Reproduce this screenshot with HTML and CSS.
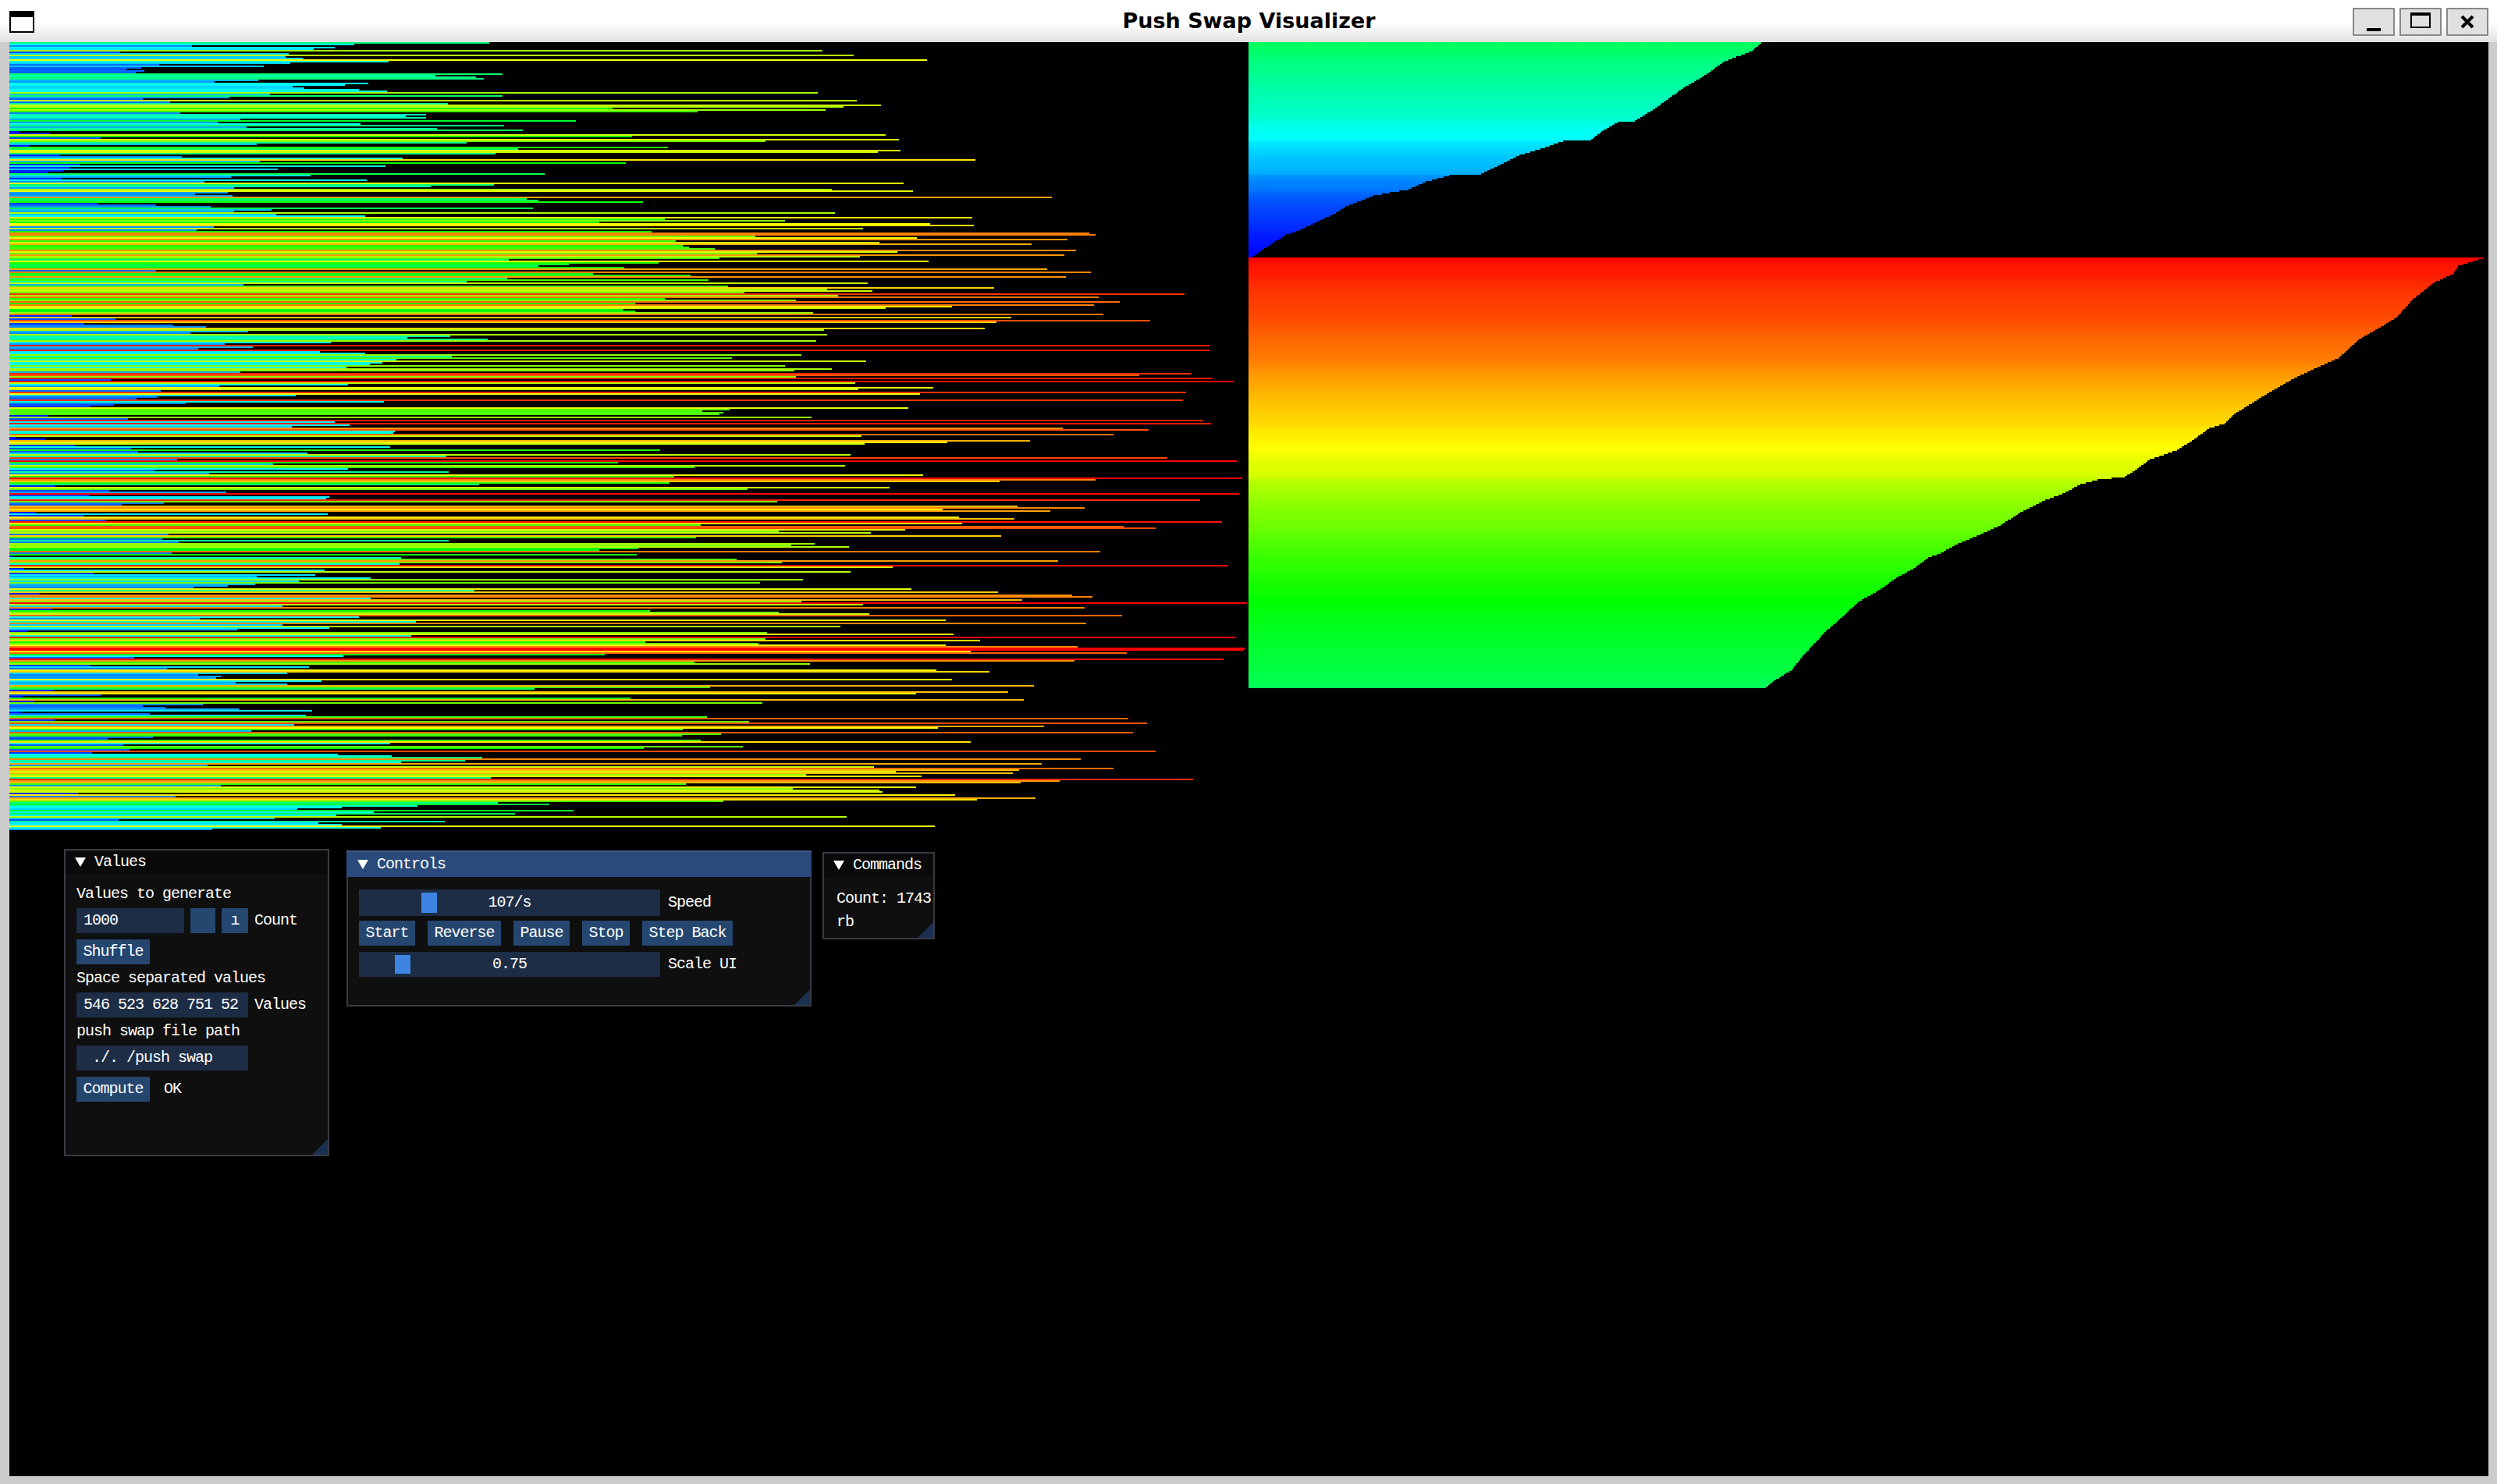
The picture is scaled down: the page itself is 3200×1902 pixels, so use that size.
FILE: index.html
```html
<!DOCTYPE html>
<html lang="en">
<head>
    <meta charset="UTF-8">
    <title>Push Swap Visualizer</title>
    <link rel="stylesheet" href="styles.css">
</head>
<body>
    <div class="app">
        <header class="titlebar">
            <div class="titlebar-left"><span class="app-icon"></span></div>
            <div class="titlebar-title">Push Swap Visualizer</div>
            <div class="titlebar-buttons">
                <button class="wm-btn"><svg width="18" height="4" viewBox="0 0 18 4" class="wm-min"><rect width="18" height="4"/></svg></button>
                <button class="wm-btn"><span class="wm-max"></span></button>
                <button class="wm-btn"><svg width="18" height="18" viewBox="0 0 18 18"><path d="M2 2 L16 16 M16 2 L2 16" stroke="#000" stroke-width="4" fill="none"/></svg></button>
            </div>
        </header>

        <main class="canvas">
            <div class="stack-left" id="bars"></div>
            <div class="stack-right">
                <div id="stack-b"></div>
                <div id="stack-a"></div>
            </div>

            <!-- Values window -->
            <section class="win win-values">
                <div class="win-title"><svg class="arrow" viewBox="0 0 14 12"><path d="M0 0 H14 L7 12 Z"/></svg><span>Values</span></div>
                <div class="win-body">
                    <div class="line">Values to generate</div>
                    <div class="row">
                        <div class="input input-count">1000</div>
                        <div class="btn btn-step"></div>
                        <div class="btn btn-plus">ı</div>
                        <div class="label">Count</div>
                    </div>
                    <div class="row"><div class="btn">Shuffle</div></div>
                    <div class="line">Space separated values</div>
                    <div class="row">
                        <div class="input input-wide">546 523 628 751 52</div>
                        <div class="label">Values</div>
                    </div>
                    <div class="line">push swap file path</div>
                    <div class="row"><div class="input input-wide"> ./. /push swap</div></div>
                    <div class="row">
                        <div class="btn">Compute</div>
                        <div class="label label-ok">OK</div>
                    </div>
                </div>
                <div class="grip"></div>
            </section>

            <!-- Controls window -->
            <section class="win win-controls">
                <div class="win-title"><svg class="arrow" viewBox="0 0 14 12"><path d="M0 0 H14 L7 12 Z"/></svg><span>Controls</span></div>
                <div class="win-body">
                    <div class="row">
                        <div class="slider slider-speed"><span class="grab grab-speed"></span><span class="slider-text">107/s</span></div>
                        <div class="label">Speed</div>
                    </div>
                    <div class="row row-buttons">
                        <div class="btn">Start</div>
                        <div class="btn">Reverse</div>
                        <div class="btn">Pause</div>
                        <div class="btn">Stop</div>
                        <div class="btn">Step Back</div>
                    </div>
                    <div class="row">
                        <div class="slider"><span class="grab grab-scale"></span><span class="slider-text">0.75</span></div>
                        <div class="label">Scale UI</div>
                    </div>
                </div>
                <div class="grip"></div>
            </section>

            <!-- Commands window -->
            <section class="win win-commands">
                <div class="win-title"><svg class="arrow" viewBox="0 0 14 12"><path d="M0 0 H14 L7 12 Z"/></svg><span>Commands</span></div>
                <div class="win-body">
                    <div class="cmd-line">Count: 1743</div>
                    <div class="cmd-line">rb</div>
                </div>
                <div class="grip"></div>
            </section>
        </main>
    </div>

    <script src="stacks.js"></script>
</body>
</html>
```

FILE: styles.css
```css
* {
    box-sizing: border-box;
}

body {
    margin: 0;
    background-color: #ccc;
    font-family: "Liberation Mono", monospace;
    color: #fff;
}

.app {
    display: flex;
    flex-direction: column;
    height: 100vh;
}

/* window manager bar */
.titlebar {
    display: grid;
    grid-template-columns: 1fr auto 1fr;
    align-items: center;
    height: 54px;
    padding: 0 11px 0 12px;
    background: linear-gradient(#fff 0, #fff 30px, #e0e0e0 54px);
    color: #000;
}

.titlebar-title {
    font-family: "DejaVu Sans", sans-serif;
    font-weight: bold;
    font-size: 27px;
    line-height: 26px;
}

.app-icon {
    display: block;
    width: 32px;
    height: 28px;
    margin-top: 2px;
    border: 2px solid #000;
    border-top-width: 8px;
    background-color: #fff;
}

.titlebar-buttons {
    display: flex;
    justify-content: flex-end;
    gap: 6px;
    margin-top: 2px;
}

.wm-btn {
    display: flex;
    justify-content: center;
    align-items: center;
    width: 54px;
    height: 36px;
    padding: 0;
    background-color: #e0e0e0;
    border: 2px solid #888;
    border-radius: 1px;
}

.wm-min {
    margin-top: 20px;
}

.wm-max {
    display: block;
    width: 26px;
    height: 20px;
    border: 2px solid #000;
    border-top-width: 4px;
    margin-bottom: 4px;
}

/* drawing area */
.canvas {
    position: relative;
    flex: 1;
    display: flex;
    gap: 0;
    margin: 0 11px 10px 12px;
    background-color: #000;
    overflow: hidden;
}

.stack-left {
    width: 1588px;
}

.bar {
    height: 2px;
}

/* imgui windows */
.win {
    position: absolute;
    background-color: #0f0f0f;
    border: 2px solid #3a3a44;
    font-size: 20px;
    letter-spacing: -1px;
    line-height: 20px;
}

.win-values {
    left: 70px;
    top: 1034px;
    width: 340px;
    height: 394px;
}

.win-controls {
    left: 432px;
    top: 1036px;
    width: 596px;
    height: 200px;
}

.win-commands {
    left: 1042px;
    top: 1038px;
    width: 144px;
    height: 112px;
}

.win-title {
    display: flex;
    align-items: center;
    gap: 11px;
    height: 30px;
    padding-left: 12px;
    background-color: #0a0a0a;
}

.win-controls .win-title {
    margin: -2px -2px 0;
    height: 34px;
    padding-left: 14px;
    background-color: #294a7a;
    border-top: 2px solid #3f5a86;
}

.arrow {
    display: block;
    width: 14px;
    height: 12px;
    fill: #fff;
}

.win-body {
    display: flex;
    flex-direction: column;
    gap: 8px;
    padding: 16px 14px;
}

.win-commands .win-body {
    gap: 0;
    padding: 13px 16px;
}

.row {
    display: flex;
    gap: 8px;
}

.row-buttons {
    gap: 16px;
    margin-top: -2px;
}

.line {
    height: 20px;
    white-space: pre;
}

.cmd-line {
    height: 30px;
    line-height: 30px;
    white-space: pre;
}

.input {
    height: 32px;
    padding: 0 9px;
    line-height: 32px;
    background-color: #1d2d45;
    white-space: pre;
}

.input-count {
    width: 138px;
}

.input-wide {
    width: 220px;
}

.btn {
    height: 32px;
    padding: 0 8.5px;
    line-height: 32px;
    background-color: #24466f;
    white-space: pre;
}

.btn-step {
    width: 32px;
}

.btn-plus {
    width: 34px;
    padding: 0;
    text-align: center;
}

.label {
    line-height: 32px;
    white-space: pre;
}

.label-ok {
    margin-left: 10px;
}

.slider {
    position: relative;
    width: 386px;
    height: 32px;
    margin-right: 2px;
    line-height: 32px;
    text-align: center;
    background-color: #1d2d45;
}

.slider-speed {
    height: 34px;
    line-height: 34px;
}

.slider-speed + .label {
    line-height: 34px;
}

.slider-text {
    position: relative;
}

.grab {
    position: absolute;
    top: 4px;
    bottom: 4px;
    width: 20px;
    background-color: #3d85e0;
}

.grab-speed {
    left: 80px;
}

.grab-scale {
    left: 46px;
}

.grip {
    position: absolute;
    right: 0;
    bottom: 0;
    width: 20px;
    height: 20px;
    background-color: #1a3050;
    clip-path: polygon(100% 0, 100% 100%, 0 100%);
}
```

FILE: stacks.js
```js
// right end of each bar, as read off the run (1px = 0.98 units, bars start at 12)
const barEnds = [
    615,445,241,421,394,1033,151,363,1072,359,380,1164,488,365,200,331,178,159,182,171,
    631,547,598,608,325,270,463,433,368,382,451,486,1027,339,631,288,180,1076,214,563,
    1107,1060,770,1037,876,227,535,510,535,302,723,274,453,633,310,549,657,24,63,1113,
    794,127,1129,962,586,323,37,839,651,1131,1103,623,76,229,506,1225,327,786,100,484,
    88,349,80,61,684,390,290,78,461,257,1135,621,541,294,1045,1147,286,245,292,1321,
    662,676,808,123,196,265,670,341,294,1049,347,459,1221,835,986,753,1168,1223,269,1084,
    247,819,1368,1376,949,1152,1341,849,1105,1296,858,866,898,1352,1127,951,1337,1080,904,639,
    1166,827,715,676,784,1315,196,1370,745,868,1339,637,890,586,1090,306,915,1249,1039,1096,
    935,1488,1053,1380,835,1000,1407,798,1374,1196,1113,782,798,1021,1386,90,1270,145,1445,1252,
    106,218,259,1237,1035,312,239,1039,566,512,613,1025,416,282,1519,318,249,1519,402,459,
    1007,568,919,498,1088,480,465,986,435,1045,998,302,1497,1431,1000,1523,139,1550,1074,437,
    276,1172,1078,202,1490,1156,372,198,172,1486,482,233,143,114,1141,917,882,909,904,61,
    1019,161,1511,421,1521,439,367,1335,1443,496,494,1399,1082,
    20,57,1294,1190,1086,94,490,165,829,174,386,1068,561,1466,223,1554,776,343,1062,872,
    437,194,564,263,1160,847,1560,1376,1256,841,602,69,1117,939,137,284,1556,112,414,410,
    1507,976,206,153,1278,1362,1184,1319,45,412,106,1205,1274,133,1535,1209,880,1411,1452,1137,
    978,1094,212,1258,874,204,564,225,1023,994,1066,802,753,1382,216,800,16,504,925,1329,
    982,502,1543,1121,31,408,1068,118,396,323,466,1009,376,955,321,286,243,1145,596,1254,
    49,1347,1372,466,1284,1007,1566,1084,355,1362,65,817,978,1092,1409,451,251,1188,523,1364,
    355,1056,414,298,35,964,1198,517,1552,962,1231,811,953,1188,1354,1564,1562,1219,1415,760,
    431,169,1537,1350,872,1017,114,388,210,1176,1243,361,249,278,272,1196,404,296,361,1299,
    892,672,67,1266,1151,127,29,792,1286,43,958,255,180,208,300,392,27,188,384,888,
    1417,69,941,1441,370,1311,1178,858,316,1423,906,857,192,135,880,1219,490,155,933,809,
    163,1452,116,425,492,606,1358,584,504,1309,261,1098,1399,1280,1125,1272,1013,1158,617,1499,
    1331,1282,862,278,1151,996,1105,1109,98,1200,221,1301,1227,909,625,690,525,429,374,721,
    470,647,423,1064,345,149,559,400,429,1174,478,267
];

// [row, length] breakpoints of the two sorted stacks
const stackB = [
    [0,657],[5,646],[12,610],[22,581],[29,557],[42,521],[50,495],[51,473],[56,455],[62,439],
    [63,403],[68,374],[72,347],[77,327],[84,298],[85,257],[89,227],[94,205],[96,181],[98,160],
    [105,124],[109,112],[120,66],[123,48],[130,26],[138,2]
];

const stackA = [
    [0,1582],[2,1569],[5,1550],[10,1544],[16,1518],[26,1493],[38,1471],[45,1448],[52,1423],[64,1397],
    [71,1365],[77,1340],[86,1308],[91,1292],[100,1263],[106,1251],[109,1231],[116,1212],[123,1190],[129,1155],
    [136,1136],[140,1123],[142,1088],[145,1066],[151,1043],[155,1021],[163,989],[171,964],[177,938],[183,909],
    [189,887],[192,871],[199,852],[204,833],[214,804],[220,782],[229,763],[239,740],[254,712],[264,696],
    [271,673],[276,661]
];

const hueStops = [[0,240],[436,180],[785,120],[1193,60],[1582,0]];

function lerpStops(stops, x) {
    for (let i = 1; i < stops.length; i++) {
        if (x <= stops[i][0]) {
            const [x0, y0] = stops[i - 1];
            const [x1, y1] = stops[i];
            return y0 + (y1 - y0) * (x - x0) / (x1 - x0);
        }
    }
    return stops[stops.length - 1][1];
}

function addBar(parent, len) {
    const bar = document.createElement("div");
    bar.className = "bar";
    bar.style.width = Math.round(len) + "px";
    bar.style.backgroundColor = `hsl(${lerpStops(hueStops, len).toFixed(1)}, 100%, 50%)`;
    parent.appendChild(bar);
}

function drawStack(id, points) {
    const el = document.getElementById(id);
    const rows = points[points.length - 1][0];
    for (let r = 0; r < rows; r++) {
        addBar(el, lerpStops(points, r));
    }
}

const barsEl = document.getElementById("bars");
barEnds.forEach(end => addBar(barsEl, (end - 12) / 0.98));
drawStack("stack-b", stackB);
drawStack("stack-a", stackA);
```
